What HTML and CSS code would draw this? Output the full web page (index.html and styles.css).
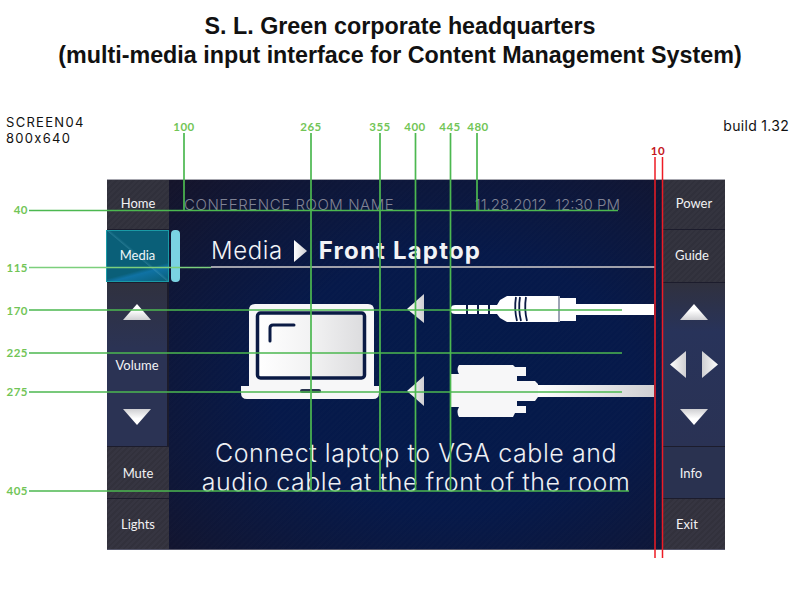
FILE: index.html

```html
<!DOCTYPE html>
<html lang="en">
<head>
  <meta charset="UTF-8">
  <title>S. L. Green - Screen 04</title>
  <link rel="stylesheet" href="styles.css">
</head>
<body>
  <h1 class="page-title">S. L. Green corporate headquarters<br>(multi-media input interface for Content Management System)</h1>

  <div class="notes">
    <div class="screen-name">SCREEN04<br>800x640</div>
    <div class="build">build 1.32</div>
  </div>

  <div class="screen">
    <div class="rail">
      <div class="btn top">Home</div>
      <div class="btn active">Media</div>
      <div class="btn-group narrow">
        <svg class="arrow" width="28" height="16" viewBox="0 0 28 16"><path fill="url(#shadeUp)" d="M14 0 L28 16 H0 Z"/></svg>
        <span>Volume</span>
        <svg class="arrow" width="28" height="16" viewBox="0 0 28 16"><path fill="url(#shadeDown)" d="M0 0 H28 L14 16 Z"/></svg>
      </div>
      <div class="btn low">Mute</div>
      <div class="btn low last">Lights</div>
    </div>

    <div class="main">
      <div class="scroll-pill"></div>
      <div class="status">
        <span class="room">CONFERENCE ROOM NAME</span>
        <span>11.28.2012&nbsp;&nbsp;12:30 PM</span>
      </div>
      <div class="heading">
        <span class="crumb">Media</span>
        <svg width="13" height="22" viewBox="0 0 13 22"><path fill="url(#shade)" d="M0 0 L13 11 L0 22 Z"/></svg>
        <strong>Front Laptop</strong>
      </div>

      <!-- viewBox uses page coordinates so the drawing is easy to check against the guides -->
      <svg class="diagram" width="494" height="130" viewBox="169 290 494 130">
        <defs>
          <linearGradient id="shade" x1="0" x2="1" y1="0" y2="0">
            <stop offset="0" stop-color="#fff"/>
            <stop offset="1" stop-color="#cfcfd2"/>
          </linearGradient>
          <linearGradient id="shadeRev" x1="0" x2="1" y1="0" y2="0">
            <stop offset="0" stop-color="#cfcfd2"/>
            <stop offset="1" stop-color="#fff"/>
          </linearGradient>
          <linearGradient id="shadeUp" x1="0" x2="0" y1="0" y2="1">
            <stop offset="0.4" stop-color="#fff"/>
            <stop offset="1" stop-color="#cfcfd2"/>
          </linearGradient>
          <linearGradient id="shadeDown" x1="0" x2="0" y1="0" y2="1">
            <stop offset="0" stop-color="#cfcfd2"/>
            <stop offset="0.6" stop-color="#fff"/>
          </linearGradient>
          <linearGradient id="panel" x1="0" x2="1" y1="0" y2="0">
            <stop offset="0" stop-color="#fff"/>
            <stop offset="0.5" stop-color="#f2f2f3"/>
            <stop offset="1" stop-color="#dcdcde"/>
          </linearGradient>
        </defs>

        <!-- laptop -->
        <path d="M255 305 H368 Q374 305 374 311 V387 H379 V394 Q379 400 373 400 H247 Q241 400 241 394 V387 H249 V311 Q249 305 255 305 Z" fill="#f7f7f8"/>
        <rect x="257.500" y="314" width="107" height="65" rx="3" fill="url(#panel)" stroke="#0a1a44" stroke-width="3.500"/>
        <path d="M270 342 V329 Q270 326 273 326 H294" fill="none" stroke="#0a1a44" stroke-width="3" stroke-linecap="round"/>
        <rect x="300" y="390" width="21" height="4" rx="2" fill="#2a3350"/>

        <!-- arrows pointing at the laptop -->
        <path d="M407 310 L424 295 V324 Z" fill="url(#shade)"/>
        <path d="M407 392 L424 377 V407 Z" fill="url(#shade)"/>

        <!-- audio jack -->
        <path d="M451 308 Q452 306 455 306 H497 L500 301 L507 297 H560 V299 H576 V305 H654 V316 H576 V322 H560 V323 H507 L500 319 L497 315 H455 Q452 315 451 313 Z" fill="#fff"/>
        <path d="M467 306 V315 M478 306 V315 M489 306 V315" stroke="#0a1a44" stroke-width="2"/>
        <path d="M516 298 Q514 310 517 322 M520 298 Q518 310 521 322 M526 298 Q524 310 527 322" fill="none" stroke="#0a1a44" stroke-width="1.800"/>
        <path d="M559 297 V323" stroke="#0a1a44" stroke-width="0.800"/>

        <!-- vga plug -->
        <path d="M451 375 H459 Q456 370 459 366 H513 L515 368 H526 V377 H517 V382 H535 L538 385 V398 L535 402 H517 V407 H526 V414 H515 L513 418 H459 Q456 413 459 408 H451 Z" fill="#f7f7f8"/>
        <rect x="538" y="386" width="116" height="12" fill="url(#shade)"/>
      </svg>

      <p class="caption">Connect laptop to VGA cable and<br>audio cable at the front of the room</p>
    </div>

    <div class="rail">
      <div class="btn top">Power</div>
      <div class="btn guide">Guide</div>
      <div class="btn-group nav">
        <svg class="arrow" width="28" height="16" viewBox="0 0 28 16"><path fill="url(#shadeUp)" d="M14 0 L28 16 H0 Z"/></svg>
        <div class="nav-mid">
          <svg width="16" height="27" viewBox="0 0 16 27"><path fill="url(#shade)" d="M0 13.500 L16 0 V27 Z"/></svg>
          <svg width="16" height="27" viewBox="0 0 16 27"><path fill="url(#shadeRev)" d="M0 0 L16 13.500 L0 27 Z"/></svg>
        </div>
        <svg class="arrow" width="28" height="16" viewBox="0 0 28 16"><path fill="url(#shadeDown)" d="M0 0 H28 L14 16 Z"/></svg>
      </div>
      <div class="btn low-navy info">Info</div>
      <div class="btn low last exit">Exit</div>
    </div>
  </div>

  <!-- spec guides drawn over the screen -->
  <svg class="guides" width="800" height="600" viewBox="0 0 800 600">
    <g class="g-line">
      <path d="M29 210.500 H618 M184 133 V210 M477 133 V210"/>
      <path class="thin" d="M29 267.500 H211"/>
      <path d="M29 310 H622 M29 353 H622 M29 392 H622 M29 491 H629"/>
      <path d="M311 133 V491 M380 133 V490 M415.500 133 V490 M450.500 133 V490"/>
    </g>
    <path class="r-line" d="M655 157 V558 M662.500 157 V558"/>
    <g class="g-text">
      <text x="184" y="131" text-anchor="middle">100</text>
      <text x="311" y="131" text-anchor="middle">265</text>
      <text x="380" y="131" text-anchor="middle">355</text>
      <text x="415" y="131" text-anchor="middle">400</text>
      <text x="450" y="131" text-anchor="middle">445</text>
      <text x="478" y="131" text-anchor="middle">480</text>
      <text x="28" y="214" text-anchor="end">40</text>
      <text x="28" y="272" text-anchor="end">115</text>
      <text x="28" y="315" text-anchor="end">170</text>
      <text x="28" y="357" text-anchor="end">225</text>
      <text x="28" y="396" text-anchor="end">275</text>
      <text x="28" y="495" text-anchor="end">405</text>
    </g>
    <text class="r-text" x="658" y="155" text-anchor="middle">10</text>
  </svg>
</body>
</html>
```

FILE: styles.css

```css
html, body {
  margin: 0;
  padding: 0;
}
body {
  position: relative;
  width: 800px;
  height: 600px;
  overflow: hidden;
  background: #fff;
  font-family: "Liberation Sans", sans-serif;
  color: #111;
}
.page-title {
  margin: 0;
  padding-top: 12px;
  height: 99px;
  box-sizing: border-box;
  font-size: 23.300px;
  line-height: 29px;
  font-weight: bold;
  text-align: center;
}
.notes {
  display: flex;
  justify-content: space-between;
  align-items: flex-start;
  height: 80px;
  padding: 15px 11px 0 6px;
  box-sizing: border-box;
  font-family: "Inter", sans-serif;
  font-size: 13px;
  line-height: 16px;
}
.screen-name {
  letter-spacing: 1.300px;
}
.build {
  padding-top: 4px;
  font-size: 14px;
  letter-spacing: 0.300px;
}
.screen {
  display: flex;
  width: 618px;
  height: 371px;
  margin-left: 107px;
  box-sizing: border-box;
  border-top: 1px solid #a6a6ae;
  border-bottom: 1px solid #55566a;
  background: #12132a;
}
.rail {
  display: flex;
  flex-direction: column;
  width: 62px;
  flex: none;
  font-family: "Lato", sans-serif;
  font-size: 13px;
  color: #f2f2f4;
  background: #1c1c2c;
}
.btn {
  display: flex;
  flex: none;
  align-items: center;
  justify-content: center;
  height: 51px;
  margin-bottom: 1px;
  box-sizing: border-box;
  background: repeating-linear-gradient(135deg, #34343f 0 2px, #30303b 2px 4px);
}
.btn.top {
  height: 49px;
  padding-bottom: 3px;
}
.btn.guide {
  height: 52px;
  padding-bottom: 2px;
  padding-right: 4px;
}
.btn.active {
  height: 52px;
  margin-left: -1px;
  padding-bottom: 2px;
  border: 1px solid #1a9aa6;
  background:
    linear-gradient(40deg, transparent 49%, rgba(110,190,215,0.22) 50%, transparent 53%),
    linear-gradient(165deg, transparent 72%, rgba(20,130,200,0.55) 78%, rgba(20,130,200,0.2) 92%, transparent 100%),
    #0a5f78;
  color: #eef6f8;
}
.btn.low {
  background: repeating-linear-gradient(135deg, #363541 0 2px, #32313c 2px 4px);
}
.btn.low-navy {
  background: #2a3250;
}
.btn.info {
  padding-right: 6px;
}
.btn.last {
  flex: 1;
  margin-bottom: 0;
}
.btn.exit {
  padding-right: 14px;
}
.btn-group {
  display: flex;
  flex: none;
  flex-direction: column;
  align-items: center;
  justify-content: space-between;
  height: 163px;
  margin-bottom: 1px;
  padding: 21px 0;
  box-sizing: border-box;
  background: linear-gradient(#30313f, #2b3354 40%, #2b3354);
}
.btn-group.narrow {
  margin-right: 2px;
}
.nav {
  background: linear-gradient(#30313f, #28335a 30%, #2a3254);
}
.nav-mid {
  display: flex;
  gap: 16px;
}
.arrow {
  display: block;
}
.main {
  position: relative;
  flex: 1;
  min-width: 0;
  background:
    repeating-linear-gradient(135deg, rgba(255,255,255,0.007) 0 2px, transparent 2px 4px),
    radial-gradient(ellipse at 58% 55%, #041a4a 0, #06194a 45%, #0f1636 80%, #15142a 100%);
}
.scroll-pill {
  position: absolute;
  left: 2px;
  top: 50px;
  width: 9px;
  height: 52px;
  border-radius: 4px;
  background: #7ad2e2;
}
.status {
  display: flex;
  justify-content: space-between;
  height: 50px;
  padding: 15px 43px 0 15px;
  box-sizing: border-box;
  font-family: "Inter", sans-serif;
  font-weight: 300;
  font-size: 15px;
  color: #808394;
}
.room {
  letter-spacing: 0.550px;
}
.heading {
  display: flex;
  align-items: center;
  gap: 11px;
  height: 38px;
  margin: 0 8px 0 42px;
  padding-top: 5px;
  box-sizing: border-box;
  border-bottom: 2px solid #a0a1ab;
  font-family: "Inter", sans-serif;
  font-size: 24px;
  font-weight: 300;
  color: #f2f3f6;
}
.crumb {
  letter-spacing: 0.600px;
}
.heading strong {
  margin-left: 1px;
  font-weight: 700;
  letter-spacing: 1.200px;
}
.diagram {
  display: block;
  margin-top: 21px;
}
.caption {
  margin: 20px 0 0;
  font-family: "Inter", sans-serif;
  font-weight: 300;
  font-size: 25px;
  line-height: 29px;
  letter-spacing: 0.550px;
  text-align: center;
  color: #eef0f4;
}
.guides {
  position: absolute;
  left: 0;
  top: 0;
  pointer-events: none;
}
.g-line {
  fill: none;
  stroke: #4cb850;
  stroke-width: 1.700;
}
.g-line .thin {
  stroke: #7ccf7c;
}
.r-line {
  fill: none;
  stroke: #ee1c25;
  stroke-width: 1.500;
}
.g-text, .r-text {
  font-family: "Lato", sans-serif;
  font-size: 11.500px;
  font-weight: 700;
  letter-spacing: 0.500px;
}
.g-text {
  fill: #72c557;
}
.r-text {
  fill: #c4161c;
}
```
